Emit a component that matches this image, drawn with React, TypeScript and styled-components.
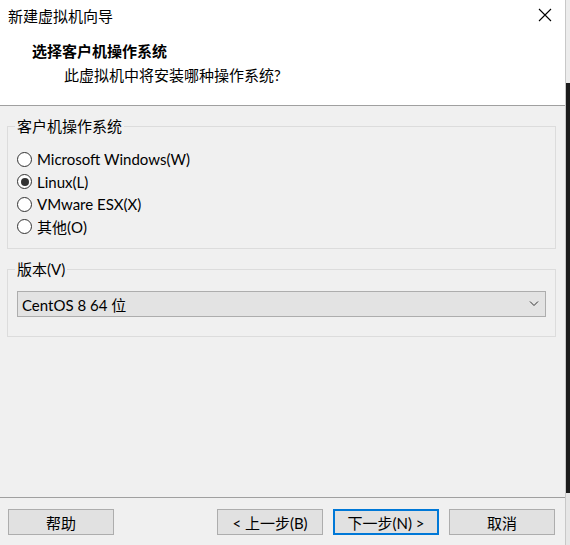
import styled, { createGlobalStyle } from "styled-components";

const GlobalStyle = createGlobalStyle`
  html, body {
    margin: 0;
    padding: 0;
    background: #f0f0f0;
  }
  body {
    font-family: Lato, "Noto Sans CJK SC", sans-serif;
    font-size: 15px;
    color: #000;
  }
`;

const Screen = styled.div`
  display: flex;
  width: 570px;
  height: 545px;
  overflow: hidden;
`;

const Window = styled.div`
  display: flex;
  flex-direction: column;
  width: 566px;
  height: 545px;
  background: #f0f0f0;
  border-right: 1px solid #c8c8c8;
  box-sizing: border-box;
`;

/* the desktop behind the dialog, seen on the right edge */
const Outside = styled.div`
  flex: 1;
  background: linear-gradient(
    to bottom,
    #ececec 0,
    #ececec 83px,
    #1c1c1c 83px,
    #1c1c1c 493px,
    #e6e6e6 493px
  );
`;

const Header = styled.div`
  background: #fff;
  height: 106px;
  box-sizing: border-box;
  border-bottom: 1px solid #a0a0a0;
`;

const TitleBar = styled.div`
  display: flex;
  align-items: center;
  justify-content: space-between;
  height: 30px;
  padding: 0 12px 0 8px;
`;

const CloseButton = styled.div`
  display: flex;
  width: 16px;
  height: 16px;
  align-items: center;
  justify-content: center;
`;

const Heading = styled.div`
  margin-top: 10px;
  padding-left: 32px;
  line-height: 22px;
  font-weight: bold;
`;

const SubHeading = styled.div`
  margin-top: 2px;
  padding-left: 64px;
  line-height: 22px;
`;

const Body = styled.div`
  flex: 1;
  display: flex;
  flex-direction: column;
  padding: 10px 9px 0 7px;
`;

const Group = styled.fieldset<{ $top?: number; $bottom: number }>`
  margin: ${(p) => p.$top ?? 0}px 0 0 0;
  padding: 0 9px ${(p) => p.$bottom}px 8px;
  border: 1px solid #dcdcdc;
  min-width: 0;
`;

const Legend = styled.legend`
  margin-left: -1px;
  padding: 0 2px;
  line-height: 20px;
`;

const RadioList = styled.div`
  display: flex;
  flex-direction: column;
  padding-top: 12px;
`;

const RadioRow = styled.label`
  display: flex;
  align-items: center;
  height: 22.5px;
  gap: 5px;
  margin-left: 1px;
`;

const RadioCircle = styled.span<{ $checked?: boolean }>`
  display: flex;
  align-items: center;
  justify-content: center;
  width: 15px;
  height: 15px;
  box-sizing: border-box;
  border: 1px solid #333;
  border-radius: 50%;
  background: #fff;
  &::after {
    content: "";
    display: ${(p) => (p.$checked ? "block" : "none")};
    width: 8px;
    height: 8px;
    border-radius: 50%;
    background: #333;
  }
`;

const Select = styled.div`
  display: flex;
  align-items: center;
  justify-content: space-between;
  height: 26px;
  box-sizing: border-box;
  margin: 12px 0 0 1px;
  padding: 0 6px 0 4px;
  background: #e3e3e3;
  border: 1px solid #adadad;
`;

const Footer = styled.div`
  display: flex;
  align-items: flex-start;
  gap: 10px;
  height: 48px;
  box-sizing: border-box;
  border-top: 1px solid #a0a0a0;
  padding: 11px 10px 0 8px;
`;

const Spacer = styled.div`
  flex: 1;
`;

const Button = styled.div<{ $default?: boolean }>`
  display: flex;
  align-items: center;
  justify-content: center;
  width: 106px;
  height: 26px;
  box-sizing: border-box;
  background: #e1e1e1;
  border: ${(p) => (p.$default ? "2px solid #0078d7" : "1px solid #adadad")};
`;

const osOptions = [
  { label: "Microsoft Windows(W)", checked: false },
  { label: "Linux(L)", checked: true },
  { label: "VMware ESX(X)", checked: false },
  { label: "其他(O)", checked: false },
];

const App = () => {
  return (
    <Screen>
      <GlobalStyle />
      <Window>
        <Header>
          <TitleBar>
            <span>新建虚拟机向导</span>
            <CloseButton>
              <svg width="14" height="14" viewBox="0 0 14 14">
                <path d="M1 1L13 13M13 1L1 13" stroke="#000" strokeWidth="1.1" fill="none" />
              </svg>
            </CloseButton>
          </TitleBar>
          <Heading>选择客户机操作系统</Heading>
          <SubHeading>此虚拟机中将安装哪种操作系统?</SubHeading>
        </Header>
        <Body>
          <Group $bottom={10}>
            <Legend>客户机操作系统</Legend>
            <RadioList>
              {osOptions.map((o) => (
                <RadioRow key={o.label}>
                  <RadioCircle $checked={o.checked} />
                  <span>{o.label}</span>
                </RadioRow>
              ))}
            </RadioList>
          </Group>
          <Group $top={10} $bottom={19}>
            <Legend>版本(V)</Legend>
            <Select>
              <span>CentOS 8 64 位</span>
              <svg width="10" height="6" viewBox="0 0 10 6">
                <path d="M1 0.5L5 4.5L9 0.5" stroke="#333" strokeWidth="1" fill="none" />
              </svg>
            </Select>
          </Group>
        </Body>
        <Footer>
          <Button>帮助</Button>
          <Spacer />
          <Button>&lt; 上一步(B)</Button>
          <Button $default>下一步(N) &gt;</Button>
          <Button>取消</Button>
        </Footer>
      </Window>
      <Outside />
    </Screen>
  );
};

export default App;
